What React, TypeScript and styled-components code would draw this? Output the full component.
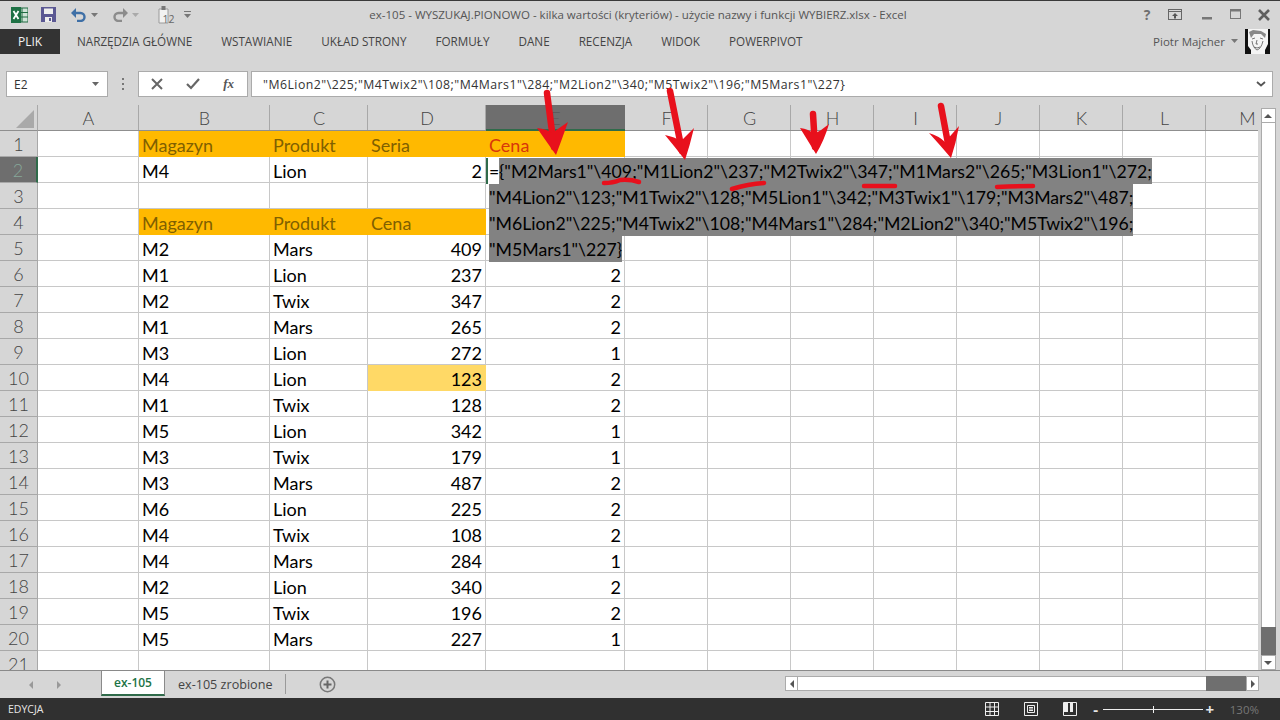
import React from 'react';
import styled, { createGlobalStyle } from 'styled-components';

const GlobalStyle = createGlobalStyle`
  html, body { margin: 0; padding: 0; background: #d6d6d6; }
  * { box-sizing: border-box; }
`;

const COLUMNS = ['A', 'B', 'C', 'D', 'E', 'F', 'G', 'H', 'I', 'J', 'K', 'L', 'M'];
const RIBBON_TABS = ['NARZĘDZIA GŁÓWNE', 'WSTAWIANIE', 'UKŁAD STRONY', 'FORMUŁY', 'DANE', 'RECENZJA', 'WIDOK', 'POWERPIVOT'];

const ORANGE = '#ffb900';
const BROWN = '#7f6000';

type RowData = (string | number)[];

const TABLE: RowData[] = [
  ['M2', 'Mars', 409, ''],
  ['M1', 'Lion', 237, 2],
  ['M2', 'Twix', 347, 2],
  ['M1', 'Mars', 265, 2],
  ['M3', 'Lion', 272, 1],
  ['M4', 'Lion', 123, 2],
  ['M1', 'Twix', 128, 2],
  ['M5', 'Lion', 342, 1],
  ['M3', 'Twix', 179, 1],
  ['M3', 'Mars', 487, 2],
  ['M6', 'Lion', 225, 2],
  ['M4', 'Twix', 108, 2],
  ['M4', 'Mars', 284, 1],
  ['M2', 'Lion', 340, 2],
  ['M5', 'Twix', 196, 2],
  ['M5', 'Mars', 227, 1],
];

const EDIT_LINES = [
  '"M4Lion2"\\123;"M1Twix2"\\128;"M5Lion1"\\342;"M3Twix1"\\179;"M3Mars2"\\487;',
  '"M6Lion2"\\225;"M4Twix2"\\108;"M4Mars1"\\284;"M2Lion2"\\340;"M5Twix2"\\196;',
  '"M5Mars1"\\227}',
];

const Page = styled.div`
  width: 1280px;
  height: 720px;
  display: flex;
  flex-direction: column;
  overflow: hidden;
  position: relative;
  background: #d6d6d6;
  border-top: 1px solid #3a3a3a;
  font-family: 'Open Sans', 'Liberation Sans', sans-serif;
`;

const TitleBar = styled.div`
  height: 27px;
  flex: none;
  display: grid;
  grid-template-columns: 1fr auto 1fr;
  align-items: center;
  padding-right: 4px;
`;

const QuickAccess = styled.div`
  display: flex;
  align-items: center;
  padding-left: 11px;
`;

const Slot = styled.span<{ $left?: number; $right?: number; $flip?: boolean }>`
  display: inline-flex;
  margin-left: ${(p) => p.$left || 0}px;
  margin-right: ${(p) => p.$right || 0}px;
  transform: ${(p) => (p.$flip ? 'scaleX(-1)' : 'none')};
`;

const WindowTitle = styled.div`
  font-size: 11.5px;
  color: #555;
  white-space: nowrap;
`;

const WindowButtons = styled.div`
  display: flex;
  justify-content: flex-end;
  align-items: center;
  gap: 13px;
  padding-right: 6px;
`;

const HelpMark = styled.span`
  font-size: 14px;
  font-weight: 700;
  color: #6f6f6f;
  width: 12px;
  text-align: center;
  margin-right: 2px;
`;

const RibbonBar = styled.div`
  height: 26px;
  flex: none;
  display: flex;
  align-items: center;
  gap: 29px;
  padding-right: 10px;
`;

const FileTab = styled.div`
  width: 60px;
  height: 25px;
  margin-right: -12px;
  background: #333;
  color: #f2f2f2;
  font-size: 12px;
  display: flex;
  align-items: center;
  justify-content: center;
`;

const RibbonTab = styled.div`
  font-size: 11.7px;
  color: #444;
  white-space: nowrap;
`;

const UserBox = styled.div`
  margin-left: auto;
  display: flex;
  align-items: center;
  font-size: 11.5px;
  color: #555;
`;

const FormulaRow = styled.div`
  flex: none;
  display: flex;
  align-items: stretch;
  height: 26px;
  margin: 17px 0 8px;
  padding: 0 7px 0 6px;
`;

const NameBox = styled.div`
  width: 102px;
  background: #fff;
  border: 1px solid #ababab;
  font-size: 12px;
  color: #333;
  display: flex;
  align-items: center;
  justify-content: space-between;
  padding: 0 8px 0 7px;
`;

const Grip = styled.div`
  width: 30px;
  display: flex;
  flex-direction: column;
  align-items: center;
  justify-content: center;
  gap: 3px;
  & > i {
    width: 2px;
    height: 2px;
    background: #777;
  }
`;

const FormulaButtons = styled.div`
  width: 110px;
  background: #fff;
  border: 1px solid #ababab;
  display: flex;
  align-items: center;
  justify-content: space-between;
  padding: 0 13px 0 12px;
  margin-right: 3px;
`;

const FxLabel = styled.span`
  font-family: 'Liberation Serif', serif;
  font-style: italic;
  font-weight: 700;
  font-size: 13px;
  color: #555;
`;

const FormulaInput = styled.div`
  flex: 1;
  background: #fff;
  border: 1px solid #ababab;
  display: flex;
  align-items: center;
  justify-content: space-between;
  padding: 0 6px 0 11px;
  font-size: 12.3px;
  letter-spacing: 0.48px;
  color: #333;
  white-space: nowrap;
`;

const SheetArea = styled.div`
  flex: 1;
  min-height: 0;
  display: flex;
`;

const Grid = styled.div`
  width: 1258px;
  display: grid;
  grid-template-columns: 38px 101px 131px 98px 118px 139px 83px 83px 83px 83px 83px 83px 83px 83px;
  grid-auto-rows: 26px;
  overflow: hidden;
  background: #fff;
  font-family: Lato, 'Liberation Sans', sans-serif;
  font-size: 18px;
  color: #000;
`;

const Corner = styled.div`
  background: #d6d6d6;
  border-right: 1px solid #a8a8a8;
  border-bottom: 1px solid #8f8f8f;
  display: flex;
  align-items: flex-end;
  justify-content: flex-end;
  padding: 0 3px 2px 0;
`;

const ColumnHead = styled.div<{ $active?: boolean }>`
  background: ${(p) => (p.$active ? '#6e6e6e' : '#d6d6d6')};
  color: ${(p) => (p.$active ? '#585858' : '#444')};
  border-bottom: ${(p) => (p.$active ? '2px solid #2f6b4a' : '1px solid #8f8f8f')};
  box-shadow: ${(p) => (p.$active ? 'none' : 'inset -1px 0 0 #a8a8a8')};
  text-align: center;
  line-height: 27px;
  font-weight: 300;
`;

const RowHead = styled.div<{ $active?: boolean }>`
  background: ${(p) => (p.$active ? '#6e6e6e' : '#d6d6d6')};
  color: ${(p) => (p.$active ? '#86a899' : '#444')};
  border-right: ${(p) => (p.$active ? '2px solid #2f6b4a' : '1px solid #a8a8a8')};
  border-bottom: 1px solid #a8a8a8;
  text-align: center;
  line-height: 27px;
  font-weight: 300;
`;

const Cell = styled.div<{ $fill?: string; $color?: string; $right?: boolean }>`
  background: ${(p) => p.$fill || '#fff'};
  color: ${(p) => p.$color || '#000'};
  border-right: 1px solid ${(p) => p.$fill || '#c8c8c8'};
  border-bottom: 1px solid ${(p) => p.$fill || '#c8c8c8'};
  text-align: ${(p) => (p.$right ? 'right' : 'left')};
  padding: 0 3px;
  line-height: 28px;
  white-space: nowrap;
  overflow: hidden;
`;

const EditOverlay = styled.div`
  position: absolute;
  left: 486px;
  top: 157px;
  width: 700px;
  font-family: Lato, 'Liberation Sans', sans-serif;
  font-size: 17.7px;
  line-height: 28px;
  color: #000;
  white-space: pre;
`;

const EditLine = styled.div`
  display: flex;
  height: 26px;
`;

const EditCaret = styled.span`
  background: #fff;
  border-left: 2px solid #2f6b4a;
  padding-left: 1px;
  width: 13px;
`;

const Selected = styled.span<{ $indent?: boolean }>`
  background: #828282;
  margin-left: ${(p) => (p.$indent ? '3px' : '0')};
  height: 26px;
`;

const Marks = styled.svg`
  position: absolute;
  left: 0;
  top: 0;
  pointer-events: none;
`;

const VScroll = styled.div`
  flex: 1;
  display: flex;
  flex-direction: column;
  align-items: center;
  padding: 3px 4px 0 2px;
  background: #d6d6d6;
`;

const ScrollButton = styled.div<{ $w?: number; $h?: number }>`
  width: ${(p) => p.$w || 15}px;
  height: ${(p) => p.$h || 15}px;
  flex: none;
  background: #fff;
  border: 1px solid #ababab;
  display: flex;
  align-items: center;
  justify-content: center;
`;

const VTrack = styled.div`
  flex: 1;
  width: 15px;
  background: #fff;
  border-left: 1px solid #ababab;
  border-right: 1px solid #ababab;
`;

const VThumb = styled.div`
  width: 15px;
  height: 28px;
  flex: none;
  background: #6f6f6f;
`;

const TabsBar = styled.div`
  height: 28px;
  flex: none;
  display: flex;
  align-items: flex-start;
  border-top: 1px solid #8a8a8a;
  background: #d6d6d6;
  position: relative;
`;

const TabNav = styled.div`
  width: 101px;
  height: 27px;
  display: flex;
  align-items: center;
  gap: 20px;
  padding-left: 27px;
`;

const ActiveTab = styled.div`
  width: 64px;
  height: 25px;
  background: #fff;
  border: 1px solid #8a8a8a;
  border-top: none;
  border-bottom: 2px solid #2f6b4a;
  color: #217346;
  font-size: 12px;
  font-weight: 600;
  display: flex;
  align-items: center;
  justify-content: center;
`;

const SheetTab = styled.div`
  font-size: 12.6px;
  color: #444;
  display: flex;
  align-items: center;
  padding: 0 13px;
  border-right: 1px solid #9a9a9a;
  height: 20px;
  margin-top: 3px;
  white-space: nowrap;
`;

const AddSheet = styled.div`
  height: 27px;
  display: flex;
  align-items: center;
  margin-left: 33px;
`;

const HScroll = styled.div`
  margin-left: auto;
  margin-right: 21px;
  margin-top: 5px;
  width: 474px;
  height: 15px;
  display: flex;
`;

const HTrack = styled.div`
  flex: 1;
  background: #fff;
  border-top: 1px solid #ababab;
  border-bottom: 1px solid #ababab;
`;

const HThumb = styled.div`
  width: 40px;
  background: #6f6f6f;
  flex: none;
`;

const StatusBar = styled.div`
  height: 22px;
  flex: none;
  background: #303030;
  color: #e6e6e6;
  font-size: 10.5px;
  display: flex;
  align-items: center;
  padding: 0 21px 0 8px;
`;

const ViewIcons = styled.div`
  margin-left: auto;
  display: flex;
  align-items: center;
  gap: 25px;
  margin-right: 13px;
`;

const ZoomSlider = styled.div`
  width: 100px;
  height: 1px;
  background: #eee;
  margin: 0 1px;
  position: relative;
  &::after {
    content: '';
    position: absolute;
    left: 50px;
    top: -3px;
    width: 1px;
    height: 7px;
    background: #eee;
  }
`;

const ZoomSign = styled.span`
  font-size: 15px;
  font-weight: 700;
  color: #e6e6e6;
  width: 12px;
  text-align: center;
`;

const ZoomValue = styled.span`
  margin-left: 14px;
  color: #777;
  font-size: 11.5px;
`;

const Caret: React.FC<{ color?: string }> = ({ color = '#777' }) => (
  <svg width="7" height="4" viewBox="0 0 7 4">
    <path d="M0 0h7L3.5 4z" fill={color} />
  </svg>
);

const ExcelIcon = () => (
  <svg width="17" height="16" viewBox="0 0 17 16">
    <rect x="5" y="1" width="12" height="14" fill="#cfe3d7" stroke="#1e6b41" />
    <path d="M11 1v14M5 5.5h12M5 10h12" stroke="#1e6b41" />
    <rect x="0" y="0" width="10" height="16" fill="#1e7145" />
    <path d="M2.5 4l5 8M7.5 4l-5 8" stroke="#fff" strokeWidth="1.8" />
  </svg>
);

const SaveIcon = () => (
  <svg width="15" height="15" viewBox="0 0 15 15">
    <path d="M0 0h15v15H0z" fill="#5b5893" />
    <rect x="3" y="1.5" width="9" height="5.5" fill="#eee" />
    <rect x="4" y="10" width="7" height="5" fill="#eee" />
    <rect x="8" y="11" width="2" height="3" fill="#5b5893" />
  </svg>
);

const UndoIcon: React.FC<{ color: string }> = ({ color }) => (
  <svg width="16" height="14" viewBox="0 0 16 14">
    <path d="M3 5h6.5a4 4 0 0 1 0 8H6" fill="none" stroke={color} strokeWidth="2.4" />
    <path d="M0 5l5-5v10z" fill={color} />
  </svg>
);

const TouchIcon = () => (
  <svg width="18" height="18" viewBox="0 0 18 18">
    <path d="M1 3h9v14H1z" fill="#f2f2f2" stroke="#9a9a9a" />
    <rect x="3.5" y="0" width="4" height="4" fill="#777" />
    <text x="4.5" y="16.5" fontSize="10.5" fontFamily="Open Sans" fill="#666">12</text>
  </svg>
);

const CustomizeIcon = () => (
  <svg width="7" height="9" viewBox="0 0 7 9">
    <path d="M0 1h7v1H0z" fill="#777" />
    <path d="M0 4h7L3.5 8z" fill="#777" />
  </svg>
);

const RibbonDisplayIcon = () => (
  <svg width="14" height="11" viewBox="0 0 14 11">
    <rect x="0.5" y="0.5" width="13" height="10" fill="none" stroke="#666" />
    <path d="M0 2.5h14" stroke="#666" />
    <path d="M7 4l3 3H8v2.5H6V7H4z" fill="#555" />
  </svg>
);

const MinimizeIcon = () => (
  <svg width="12" height="12" viewBox="0 0 12 12">
    <rect x="1" y="8" width="10" height="2.5" fill="#777" />
  </svg>
);

const MaximizeIcon = () => (
  <svg width="12" height="11" viewBox="0 0 12 11">
    <rect x="0.5" y="0.5" width="10" height="9" fill="none" stroke="#777" />
    <path d="M0 1.5h11" stroke="#777" strokeWidth="2" />
  </svg>
);

const CloseIcon = () => (
  <svg width="12" height="12" viewBox="0 0 12 12">
    <path d="M1 1l10 10M11 1L1 11" stroke="#5f5f5f" strokeWidth="2.6" />
  </svg>
);

const Avatar = () => (
  <svg width="25" height="25" viewBox="0 0 25 25">
    <rect width="25" height="25" fill="#f4f4f4" />
    <path d="M0 0h3v17l3 4v4H0zM25 0h-2v15l-3 6v4h5z" fill="#111" />
    <path d="M4 3l4-2 8 1 5 3-1 4-4-4-7 0-3 4z" fill="#888" />
    <path d="M7 10l3-1M15 9l3 1M12 11l-1 4h2M9 18q3 2 6 0M7 12q1 7 5 9q4-1 6-9" fill="none" stroke="#555" strokeWidth="0.8" />
  </svg>
);

const CancelIcon = () => (
  <svg width="12" height="12" viewBox="0 0 12 12">
    <path d="M1 1l10 10M11 1L1 11" stroke="#666" strokeWidth="2" />
  </svg>
);

const ConfirmIcon = () => (
  <svg width="14" height="12" viewBox="0 0 14 12">
    <path d="M1 6l4 4 8-9" fill="none" stroke="#666" strokeWidth="2.2" />
  </svg>
);

const Chevron = () => (
  <svg width="10" height="6" viewBox="0 0 10 6">
    <path d="M1 1l4 3.5L9 1" fill="none" stroke="#555" strokeWidth="1.8" />
  </svg>
);

const CornerTriangle = () => (
  <svg width="18" height="18" viewBox="0 0 18 18">
    <path d="M18 0v18H0z" fill="#a9a9a9" />
  </svg>
);

const Arrow: React.FC<{ dir: 'up' | 'down' | 'left' | 'right'; color?: string }> = ({ dir, color = '#555' }) => {
  const shapes = { up: 'M0 6h8L4 2z', down: 'M0 2h8L4 6z', left: 'M6 0v8L2 4z', right: 'M2 0v8l4-4z' };
  return (
    <svg width="8" height="8" viewBox="0 0 8 8">
      <path d={shapes[dir]} fill={color} />
    </svg>
  );
};

const AddIcon = () => (
  <svg width="17" height="17" viewBox="0 0 17 17">
    <circle cx="8.5" cy="8.5" r="7.2" fill="none" stroke="#777" strokeWidth="1.5" />
    <path d="M8.5 4.5v8M4.5 8.5h8" stroke="#666" strokeWidth="2" />
  </svg>
);

const NormalViewIcon = () => (
  <svg width="14" height="14" viewBox="0 0 14 14">
    <path d="M.5.5h13v13H.5zM5 .5v13M9.5.5v13M.5 5h13M.5 9.5h13" fill="none" stroke="#eee" />
  </svg>
);

const LayoutViewIcon = () => (
  <svg width="14" height="14" viewBox="0 0 14 14">
    <path d="M.5.5h13v13H.5z" fill="none" stroke="#eee" />
    <path d="M3.5 3.5h7v7h-7zM5 5.5h4M5 7h4M5 8.5h4" fill="none" stroke="#eee" />
  </svg>
);

const BreakViewIcon = () => (
  <svg width="14" height="14" viewBox="0 0 14 14">
    <path d="M.5.5h13v13H.5z" fill="none" stroke="#eee" />
    <path d="M1 1h4v9H1zM7 1h3v9H7z" fill="#eee" />
  </svg>
);

const ANNOTATIONS = [
  { shaft: 'M547 92L554 146', head: 'M537 127Q547 128 552 132L568 121Q562 138 556 154Q546 140 537 127Z' },
  { shaft: 'M670 90L682 150', head: 'M665 134Q675 136 681 140L694 127Q690 144 685 159Q675 146 665 134Z' },
  { shaft: 'M813 113L815 146', head: 'M800 127Q809 128 814 133Q822 129 829 123Q824 140 816 153Q808 140 800 127Z' },
  { shaft: 'M941 105L949 148', head: 'M929 132Q939 135 945 141L959 125Q956 142 951 157Q940 144 929 132Z' },
];

const UNDERLINES = [
  'M604 182Q613 182 620 179Q630 178 639 181',
  'M732 188Q748 183 764 182',
  'M864 185H895',
  'M997 186Q1015 185 1033 185',
];

const App: React.FC = () => {
  const renderRow = (index: number, cells: React.ReactNode) => (
    <React.Fragment key={index}>
      <RowHead $active={index === 2}>{index}</RowHead>
      {cells}
    </React.Fragment>
  );

  const blanks = (from: number, fill?: string) =>
    COLUMNS.slice(from).map((c) => <Cell key={c} $fill={fill} />);

  return (
    <Page>
      <GlobalStyle />
      <TitleBar>
        <QuickAccess>
          <ExcelIcon />
          <Slot $left={13}><SaveIcon /></Slot>
          <Slot $left={15}><UndoIcon color="#3e6fa6" /></Slot>
          <Slot $left={4}><Caret /></Slot>
          <Slot $left={14} $flip><UndoIcon color="#8c8c8c" /></Slot>
          <Slot $left={4}><Caret color="#aaa" /></Slot>
          <Slot $left={19}><TouchIcon /></Slot>
          <Slot $left={8}><CustomizeIcon /></Slot>
        </QuickAccess>
        <WindowTitle>ex-105 - WYSZUKAJ.PIONOWO - kilka wartości (kryteriów) - użycie nazwy i funkcji WYBIERZ.xlsx - Excel</WindowTitle>
        <WindowButtons>
          <HelpMark>?</HelpMark>
          <Slot $right={3}><RibbonDisplayIcon /></Slot>
          <Slot $left={3}><MinimizeIcon /></Slot>
          <Slot $left={4}><MaximizeIcon /></Slot>
          <Slot $left={3}><CloseIcon /></Slot>
        </WindowButtons>
      </TitleBar>

      <RibbonBar>
        <FileTab>PLIK</FileTab>
        {RIBBON_TABS.map((t) => (
          <RibbonTab key={t}>{t}</RibbonTab>
        ))}
        <UserBox>
          Piotr Majcher
          <Slot $left={6}><Caret /></Slot>
          <Slot $left={7}><Avatar /></Slot>
        </UserBox>
      </RibbonBar>

      <FormulaRow>
        <NameBox>
          E2
          <Caret color="#666" />
        </NameBox>
        <Grip>
          <i />
          <i />
          <i />
        </Grip>
        <FormulaButtons>
          <CancelIcon />
          <ConfirmIcon />
          <FxLabel>fx</FxLabel>
        </FormulaButtons>
        <FormulaInput>
          {'"M6Lion2"\\225;"M4Twix2"\\108;"M4Mars1"\\284;"M2Lion2"\\340;"M5Twix2"\\196;"M5Mars1"\\227}'}
          <Chevron />
        </FormulaInput>
      </FormulaRow>

      <SheetArea>
        <Grid>
          <Corner>
            <CornerTriangle />
          </Corner>
          {COLUMNS.map((c) => (
            <ColumnHead key={c} $active={c === 'E'}>
              {c}
            </ColumnHead>
          ))}

          {renderRow(
            1,
            <>
              <Cell />
              <Cell $fill={ORANGE} $color={BROWN}>Magazyn</Cell>
              <Cell $fill={ORANGE} $color={BROWN}>Produkt</Cell>
              <Cell $fill={ORANGE} $color={BROWN}>Seria</Cell>
              <Cell $fill={ORANGE} $color="#d8360a">Cena</Cell>
              {blanks(5)}
            </>,
          )}
          {renderRow(
            2,
            <>
              <Cell />
              <Cell>M4</Cell>
              <Cell>Lion</Cell>
              <Cell $right>2</Cell>
              {blanks(4)}
            </>,
          )}
          {renderRow(3, blanks(0))}
          {renderRow(
            4,
            <>
              <Cell />
              <Cell $fill={ORANGE} $color={BROWN}>Magazyn</Cell>
              <Cell $fill={ORANGE} $color={BROWN}>Produkt</Cell>
              <Cell $fill={ORANGE} $color={BROWN}>Cena</Cell>
              {blanks(4)}
            </>,
          )}
          {TABLE.map((row, i) =>
            renderRow(
              i + 5,
              <>
                <Cell />
                <Cell>{row[0]}</Cell>
                <Cell>{row[1]}</Cell>
                <Cell $right $fill={row[2] === 123 ? '#ffd966' : undefined}>{row[2]}</Cell>
                <Cell $right>{row[3]}</Cell>
                {blanks(5)}
              </>,
            ),
          )}
          {renderRow(21, blanks(0))}
        </Grid>
        <VScroll>
          <ScrollButton>
            <Arrow dir="up" />
          </ScrollButton>
          <VTrack />
          <VThumb />
          <ScrollButton>
            <Arrow dir="down" />
          </ScrollButton>
        </VScroll>
      </SheetArea>

      <TabsBar>
        <TabNav>
          <Arrow dir="left" color="#999" />
          <Arrow dir="right" color="#999" />
        </TabNav>
        <ActiveTab>ex-105</ActiveTab>
        <SheetTab>ex-105 zrobione</SheetTab>
        <AddSheet>
          <AddIcon />
        </AddSheet>
        <HScroll>
          <ScrollButton $w={13}>
            <Arrow dir="left" />
          </ScrollButton>
          <HTrack />
          <HThumb />
          <ScrollButton $w={13}>
            <Arrow dir="right" />
          </ScrollButton>
        </HScroll>
      </TabsBar>

      <StatusBar>
        EDYCJA
        <ViewIcons>
          <NormalViewIcon />
          <LayoutViewIcon />
          <BreakViewIcon />
        </ViewIcons>
        <ZoomSign>-</ZoomSign>
        <ZoomSlider />
        <ZoomSign>+</ZoomSign>
        <ZoomValue>130%</ZoomValue>
      </StatusBar>

      <EditOverlay>
        <EditLine>
          <EditCaret>=</EditCaret>
          <Selected>{'{"M2Mars1"\\409;"M1Lion2"\\237;"M2Twix2"\\347;"M1Mars2"\\265;"M3Lion1"\\272;'}</Selected>
        </EditLine>
        {EDIT_LINES.map((line) => (
          <EditLine key={line}>
            <Selected $indent>{line}</Selected>
          </EditLine>
        ))}
      </EditOverlay>

      <Marks width="1280" height="720" viewBox="0 0 1280 720">
        {ANNOTATIONS.map((a) => (
          <g key={a.shaft}>
            <path d={a.shaft} stroke="#e8101c" strokeWidth="6.5" strokeLinecap="round" fill="none" />
            <path d={a.head} fill="#e8101c" />
          </g>
        ))}
        {UNDERLINES.map((d) => (
          <path key={d} d={d} stroke="#e8101c" strokeWidth="4.5" strokeLinecap="round" fill="none" />
        ))}
      </Marks>
    </Page>
  );
};

export default App;
